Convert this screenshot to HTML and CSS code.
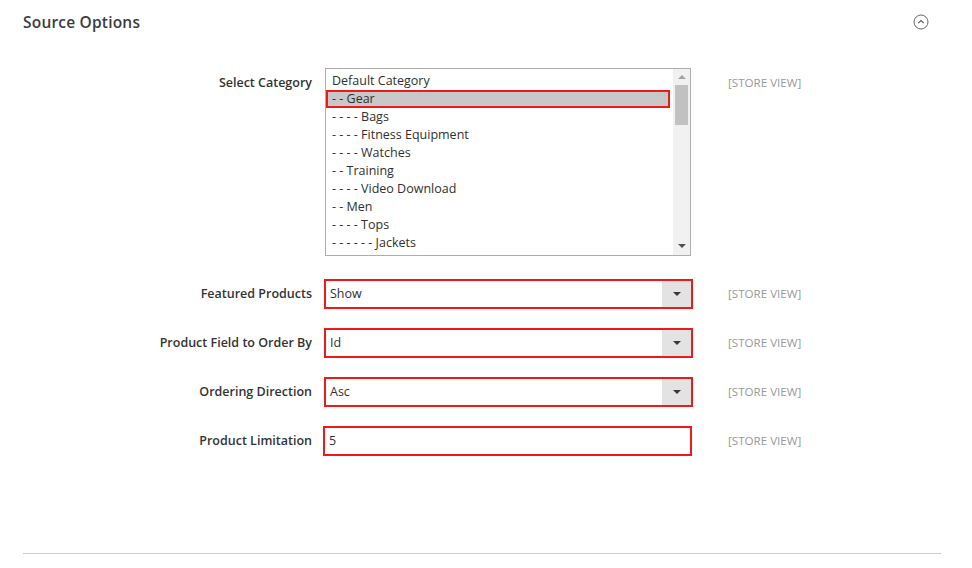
FILE: index.html
```html
<!DOCTYPE html>
<html>
<head>
<meta charset="utf-8">
<link rel="stylesheet" href="styles.css">
</head>
<body>
<div class="section">
  <div class="header">
    <span class="title">Source Options</span>
    <svg class="collapse" width="16" height="16" viewBox="0 0 16 16">
      <circle cx="8" cy="8" r="7" fill="none" stroke="#666" stroke-width="1"/>
      <path d="M5.2 9.2 L8 6.5 L10.8 9.2" fill="none" stroke="#555" stroke-width="1.1"/>
    </svg>
  </div>
  <div class="fields">
    <div class="row row-top">
      <label class="label">Select Category</label>
      <div class="listbox">
        <div class="list">
          <div class="item">Default Category</div>
          <div class="item selected">- - Gear</div>
          <div class="item">- - - - Bags</div>
          <div class="item">- - - - Fitness Equipment</div>
          <div class="item">- - - - Watches</div>
          <div class="item">- - Training</div>
          <div class="item">- - - - Video Download</div>
          <div class="item">- - Men</div>
          <div class="item">- - - - Tops</div>
          <div class="item">- - - - - - Jackets</div>
          <div class="item">- - - - - - Hoodies &amp; Sweatshirts</div>
        </div>
        <div class="scrollbar">
          <span class="arrow-up"></span>
          <span class="thumb"></span>
          <span class="arrow-down"></span>
        </div>
      </div>
      <span class="scope">[STORE VIEW]</span>
    </div>
    <div class="row">
      <label class="label">Featured Products</label>
      <div class="select"><span class="value">Show</span><span class="drop"><i></i></span></div>
      <span class="scope">[STORE VIEW]</span>
    </div>
    <div class="row">
      <label class="label">Product Field to Order By</label>
      <div class="select"><span class="value">Id</span><span class="drop"><i></i></span></div>
      <span class="scope">[STORE VIEW]</span>
    </div>
    <div class="row">
      <label class="label">Ordering Direction</label>
      <div class="select"><span class="value">Asc</span><span class="drop"><i></i></span></div>
      <span class="scope">[STORE VIEW]</span>
    </div>
    <div class="row">
      <label class="label">Product Limitation</label>
      <div class="select input"><span class="value">5</span></div>
      <span class="scope">[STORE VIEW]</span>
    </div>
  </div>
  <div class="rule"></div>
</div>
</body>
</html>
```

FILE: styles.css
```css
* { box-sizing: border-box; }
body {
  margin: 0;
  background: #fff;
  font-family: "Open Sans", "Liberation Sans", sans-serif;
  color: #303030;
}
.section {
  padding: 0 31px 0 23px;
}
.header {
  height: 44px;
  display: flex;
  align-items: center;
  justify-content: space-between;
}
.title {
  font-size: 15.5px;
  font-weight: 600;
  color: #3d3d3d;
  letter-spacing: 0.2px;
}
.collapse {
  margin-right: 12px;
}
.fields {
  padding-top: 24px;
  display: flex;
  flex-direction: column;
  gap: 19px;
}
.row {
  display: grid;
  grid-template-columns: 289px 381px auto;
  align-items: center;
  height: 30px;
}
.row-top {
  align-items: start;
  height: auto;
  margin-bottom: 4px;
}
.label {
  text-align: right;
  font-size: 12.5px;
  font-weight: 600;
  color: #333;
  line-height: 18px;
}
.row-top .label { padding-top: 6px; }
.scope {
  font-size: 11.6px;
  color: #999;
  padding-left: 35px;
  line-height: 18px;
}
.row-top .scope { padding-top: 6px; }
.listbox {
  margin-left: 13px;
  width: 366px;
  height: 188px;
  border: 1px solid #adadad;
  display: flex;
  overflow: hidden;
}
.list {
  flex: 1;
  padding-top: 3px;
  overflow: hidden;
}
.item {
  height: 18px;
  line-height: 18px;
  font-size: 12.5px;
  padding-left: 6px;
  color: #303030;
  white-space: nowrap;
}
.item.selected {
  background: #c8c8c8;
  box-shadow: inset 0 0 0 2px #ee1a1a;
}
.scrollbar {
  width: 17px;
  margin-left: 3px;
  background: #f1f1f1;
  display: flex;
  flex-direction: column;
  align-items: center;
}
.arrow-up {
  margin-top: 6px;
  width: 0; height: 0;
  border-left: 4px solid transparent;
  border-right: 4px solid transparent;
  border-bottom: 4px solid #a3a3a3;
}
.thumb {
  margin-top: 6px;
  width: 13px;
  height: 40px;
  background: #c1c1c1;
}
.arrow-down {
  margin-top: auto;
  margin-bottom: 7px;
  width: 0; height: 0;
  border-left: 4px solid transparent;
  border-right: 4px solid transparent;
  border-top: 4px solid #505050;
}
.select {
  margin-left: 12px;
  width: 369px;
  height: 30px;
  border: 2px solid #ee1a1a;
  display: flex;
  align-items: stretch;
  background: #fff;
}
.select .value {
  flex: 1;
  padding-left: 4px;
  font-size: 12.5px;
  line-height: 26px;
  color: #303030;
}
.drop {
  width: 29px;
  background: #e3e3e3;
  display: flex;
  align-items: center;
  justify-content: center;
}
.drop i {
  width: 0; height: 0;
  border-left: 4px solid transparent;
  border-right: 4px solid transparent;
  border-top: 4px solid #41362f;
}
.input { margin-left: 11px; }
.rule {
  margin-top: 97px;
  height: 1px;
  background: #cccccc;
}
```
